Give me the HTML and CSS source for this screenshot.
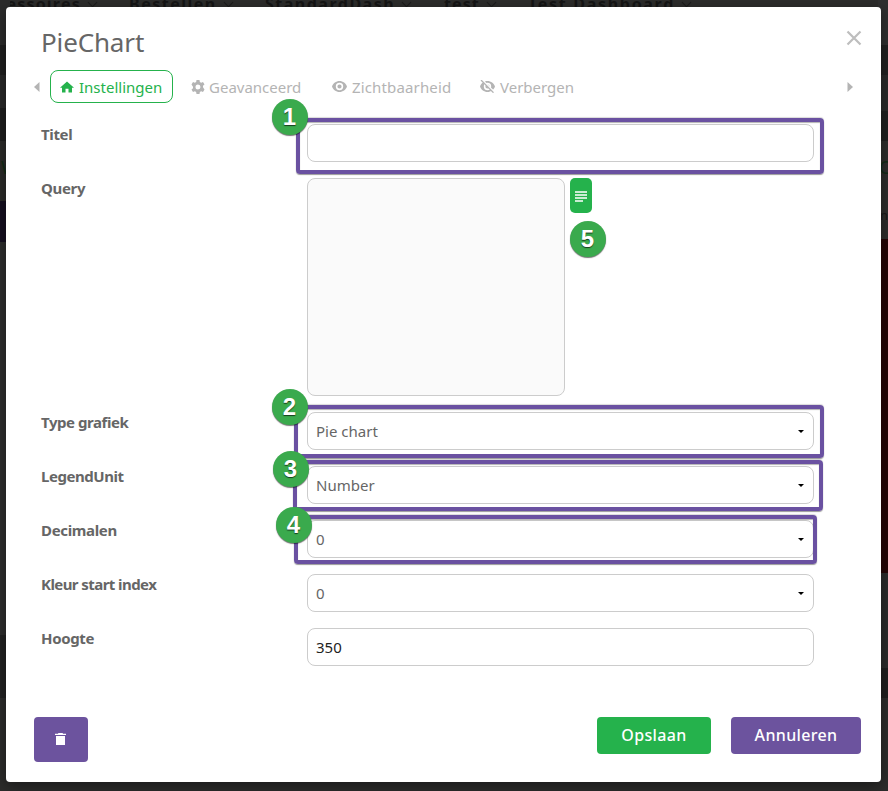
FILE: index.html
```html
<!DOCTYPE html>
<html lang="nl">
<head>
<meta charset="utf-8">
<title>PieChart</title>
<link rel="stylesheet" href="styles.css">
</head>
<body>
<div class="page">
  <nav class="topnav">
    <span class="n1">cessoires<i></i></span><span class="n2">Bestellen<i></i></span><span class="n3">StandardDash<i></i></span><span class="n4">test<i></i></span><span class="n5">Test Dashboard<i></i></span>
  </nav>
  <div class="side side-left"><b>W</b></div>
  <div class="side side-right"><b>C</b><span>nt</span></div>
</div>
<main class="modal">
  <header class="head">
    <h1>PieChart</h1>
    <svg class="close" width="16" height="16" viewBox="0 0 16 16"><path d="M1.500 1.500l13 13M14.500 1.500l-13 13" stroke="#bebebe" stroke-width="2.200" fill="none"/></svg>
  </header>
  <nav class="tabs">
    <svg class="arrow" width="6" height="10" viewBox="0 0 6 10"><path d="M5.500 0v10L0 5z"/></svg>
    <a class="tab active"><svg width="14" height="12" viewBox="0 0 14 12"><path d="M7 .5l7 6.200h-2V11.500H8.500V7.800h-3v3.700H2V6.700H0z"/></svg><span>Instellingen</span></a>
    <a class="tab tab2"><svg width="14" height="14" viewBox="0 0 14 14"><path fill-rule="evenodd" d="M5.500 0h3l.35 1.900 1.300.75L12 2l1.500 2.600-1.500 1.250v1.500L13.500 9.400 12 12l-1.850-.65-1.300.75L8.500 14h-3l-.35-1.900-1.300-.75L2 12 .5 9.400 2 8.150v-1.500L.5 4.600 2 2l1.850.65 1.300-.75zM7 4.500a2.500 2.500 0 1 0 0 5 2.500 2.500 0 0 0 0-5z"/></svg><span>Geavanceerd</span></a>
    <a class="tab tab3"><svg width="15" height="11" viewBox="0 0 15 11"><path fill-rule="evenodd" d="M7.500 0C4 0 1.200 2.300 0 5.500 1.200 8.700 4 11 7.500 11S13.800 8.700 15 5.500C13.800 2.300 11 0 7.500 0zm0 1.800a3.700 3.700 0 1 1 0 7.400 3.700 3.700 0 0 1 0-7.400zm0 1.600a2.100 2.100 0 1 0 0 4.200 2.100 2.100 0 0 0 0-4.200z"/></svg><span>Zichtbaarheid</span></a>
    <a class="tab tab4"><svg width="15" height="13" viewBox="0 0 15 13"><path fill-rule="evenodd" d="M7.500 1C4 1 1.200 3.300 0 6.500 1.200 9.700 4 12 7.500 12S13.800 9.700 15 6.500C13.800 3.300 11 1 7.500 1zm0 1.800a3.700 3.700 0 1 1 0 7.400 3.700 3.700 0 0 1 0-7.400zm0 1.600a2.100 2.100 0 1 0 0 4.200 2.100 2.100 0 0 0 0-4.200z"/><path d="M2 0l12.500 12.500" stroke="#fff" stroke-width="2"/><path d="M1 0l12.500 12.700" stroke="#b4b4b4" stroke-width="1.300"/></svg><span>Verbergen</span></a>
    <svg class="arrow next" width="6" height="10" viewBox="0 0 6 10"><path d="M.5 0v10L6 5z"/></svg>
  </nav>
  <form class="form">
    <div class="row"><label>Titel</label><div class="field"></div></div>
    <div class="row tall"><label>Query</label><div class="area"></div><div class="expand"><svg width="12" height="11" viewBox="0 0 12 11"><path d="M0 1h12M0 4h12M0 7h12M0 10h8" stroke="#fff" stroke-width="1.400"/></svg></div></div>
    <div class="row"><label class="tight">Type grafiek</label><div class="field"><span>Pie chart</span><i class="caret"></i></div></div>
    <div class="row"><label class="tight">LegendUnit</label><div class="field"><span>Number</span><i class="caret"></i></div></div>
    <div class="row"><label>Decimalen</label><div class="field"><span>0</span><i class="caret"></i></div></div>
    <div class="row"><label class="tighter">Kleur start index</label><div class="field"><span>0</span><i class="caret"></i></div></div>
    <div class="row"><label>Hoogte</label><div class="field dark"><span>350</span></div></div>
  </form>
  <footer class="foot">
    <div class="btn trash"><svg width="11" height="12" viewBox="0 0 11 12"><path d="M3.500 0h4l.6.800H11V2H0V.8h2.900zM1 3h9v9H1z" fill="#fff"/></svg></div>
    <div class="btn save">Opslaan</div>
    <div class="btn cancel">Annuleren</div>
  </footer>
</main>
<div class="mark m1"></div><div class="mark m2"></div><div class="mark m3"></div><div class="mark m4"></div>
<div class="pin p1">1</div><div class="pin p2">2</div><div class="pin p3">3</div><div class="pin p4">4</div><div class="pin p5">5</div>
</body>
</html>
```
FILE: styles.css
```css
* { box-sizing: border-box; }
body { margin: 0; width: 888px; height: 791px; overflow: hidden; position: relative; background: #2c2c2b; font: 15px/20px "Noto Sans", sans-serif; color: #666; }
.page { position: absolute; inset: 0; overflow: hidden; }
.topnav { position: absolute; left: 0; top: -8px; height: 20px; width: 888px; color: #151515; font-weight: 700; font-size: 16px; line-height: 24px; white-space: nowrap; }
.topnav span { position: absolute; top: 0; }
.topnav i { display: inline-block; width: 7px; height: 7px; margin: 0 0 4px 8px; border: solid #1c1c1c; border-width: 0 1px 1px 0; transform: rotate(45deg); }
.n1 { left: -3px; letter-spacing: 1.2px; }
.n2 { left: 129px; letter-spacing: 1.5px; }
.n3 { left: 265px; letter-spacing: 1.5px; }
.n4 { left: 444px; letter-spacing: 1.1px; }
.n5 { left: 528px; letter-spacing: 1.7px; }
.side { position: absolute; top: 0; bottom: 0; width: 10px; overflow: hidden; }
.side-left { left: 0; background: linear-gradient(#2b2b2b 45px, #1f1f1f 45px 75px, #282828 75px 108px, #1e1e1e 108px 141px, #2b2b29 141px 201px, #150f20 201px 242px, #2d2d2d 242px 635px, #222 635px 698px, #2c2c2b 698px); }
.side-right { right: 0; background: linear-gradient(#2f2f2f 45px, #212121 45px 75px, #292929 75px 111px, #202020 111px 141px, #2d2d2c 141px 239px, #240405 239px 573px, #2b2b2b 573px 668px, #1f1f1f 668px 698px, #2c2c2b 698px); }
.side b { position: absolute; left: 1px; top: 157px; color: #122b17; font-size: 18px; font-weight: 400; }
.side span { position: absolute; left: 2px; top: 205px; color: #171717; font-size: 13px; }
.modal { position: absolute; left: 6px; top: 7px; width: 875px; height: 775px; background: #fff; border-radius: 4px; box-shadow: 0 4px 14px rgba(0,0,0,.4); display: flex; flex-direction: column; }
.head { display: flex; justify-content: space-between; height: 63px; padding: 16px 19px 0 35px; }
h1 { margin: 0; font-size: 26px; line-height: 38px; font-weight: 400; letter-spacing: -.15px; }
.close { margin-top: 7px; }
.tabs { height: 33px; display: flex; align-items: center; padding-left: 28px; color: #b4b4b4; }
.arrow, .tab svg { fill: currentColor; display: block; flex: none; }
.next { margin-left: auto; margin-right: 28px; }
.tab { display: flex; align-items: center; height: 33px; white-space: nowrap; }
.tab svg { margin-right: 5px; }
.active { width: 123px; margin-left: 10px; padding-left: 9px; border: 1px solid #25b24c; border-radius: 8px; color: #25b24c; }
.tab2 { width: 141px; padding-left: 18px; }
.tab2 svg { margin-right: 4px; }
.tab3 { width: 148px; padding-left: 18px; letter-spacing: .15px; }
.tab4 { padding-left: 18px; }
.form { padding: 21px 0 0 35px; display: flex; flex-direction: column; gap: 16px; }
.row { display: flex; height: 38px; }
.row.tall { height: 218px; }
label { width: 266px; font-weight: 700; white-space: nowrap; letter-spacing: -.35px; }
.tight { letter-spacing: -.45px; }
.tighter { letter-spacing: -.57px; }
.field { width: 507px; height: 38px; border: 1px solid #ccc; border-radius: 8px; padding: 0 8px; display: flex; align-items: center; justify-content: space-between; }
.dark { color: #222; }
.caret { border: 3px solid transparent; border-top: 3px solid #000; border-bottom: 0; margin-right: 1px; }
.area { width: 258px; border: 1px solid #ccc; border-radius: 8px; background: #fafafa; }
.expand { width: 22px; height: 35px; margin-left: 5px; padding: 1px 1px 0 0; background: #25b24c; border-radius: 5px; display: flex; align-items: center; justify-content: center; }
.foot { margin-top: 51px; padding: 0 20px 0 28px; display: flex; align-items: flex-start; }
.btn { height: 37px; padding-bottom: 1px; border-radius: 4px; color: #fff; display: flex; align-items: center; justify-content: center; font-weight: 500; font-size: 16px; letter-spacing: .35px; }
.trash { width: 54px; height: 45px; padding: 0 1px 1px 0; background: #6c539e; }
.save { width: 114px; margin-left: auto; background: #25b24c; }
.cancel { width: 130px; margin-left: 20px; background: #6c539e; }
.mark { position: absolute; border: 4px solid #6a51a1; border-radius: 4px; box-shadow: 0 1px 1px rgba(0,0,0,.4), 0 -1px 1px rgba(0,0,0,.15), inset 0 1px 1px rgba(0,0,0,.3); }
.m1 { left: 296px; top: 118px; width: 528px; height: 56px; }
.m2 { left: 294px; top: 405px; width: 530px; height: 53px; }
.m3 { left: 293px; top: 460px; width: 530px; height: 51px; }
.m4 { left: 294px; top: 515px; width: 523px; height: 49px; }
.pin { position: absolute; width: 36px; height: 36px; border-radius: 50%; background: #3aaa4d; color: #fff; font: 700 24px/36px "Liberation Sans", sans-serif; text-align: center; text-shadow: 0 1px 1px rgba(0,0,0,.65); box-shadow: 0 1px 1px rgba(0,0,0,.55); }
.p1 { left: 271.5px; top: 98.5px; }
.p2 { left: 271.5px; top: 388.5px; }
.p3 { left: 272.5px; top: 450.5px; }
.p4 { left: 275.5px; top: 506.5px; }
.p5 { left: 569.5px; top: 220.5px; }
```
